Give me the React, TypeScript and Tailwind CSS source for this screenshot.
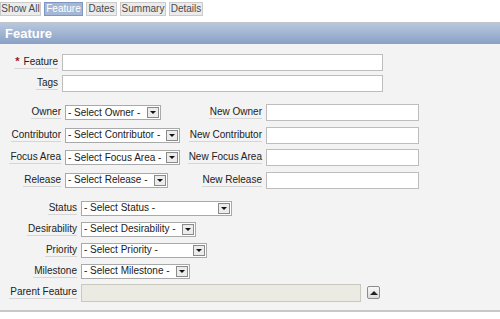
import React from 'react';

const tabs = [
  { name: 'Show All', w: 'w-[41px]', active: false },
  { name: 'Feature', w: 'w-[39px]', active: true },
  { name: 'Dates', w: 'w-[31px]', active: false },
  { name: 'Summary', w: 'w-[46px]', active: false },
  { name: 'Details', w: 'w-[34px]', active: false },
];

function Label({ text, w, required }: { text: string; w: string; required?: boolean }) {
  return (
    <div className={`${w} shrink-0 flex justify-end`}>
      <span className="border-b border-[#d6d6d6] leading-[12px] pl-[1px] text-[#222] whitespace-nowrap">
        {required && <span className="text-[#9b1515] mr-[4px] font-bold text-[11px] leading-none">*</span>}
        {text}
      </span>
    </div>
  );
}

function Select({ text, w }: { text: string; w: string }) {
  return (
    <div className={`${w} h-[15px] shrink-0 bg-white border border-[#a9a9a9] flex items-center justify-between pl-[2px] pr-[1px]`}>
      <span className="text-[#1a1a1a] whitespace-nowrap leading-none">{text}</span>
      <span className="w-[12px] h-[11px] border border-[#8a8a8a] bg-[#ececec] flex items-center justify-center">
        <span className="w-0 h-0 border-l-[3px] border-r-[3px] border-t-[3px] border-l-transparent border-r-transparent border-t-[#111]" />
      </span>
    </div>
  );
}

function TextBox({ w }: { w: string }) {
  return <div className={`${w} h-[17px] shrink-0 bg-white border border-[#bdbdbd]`} />;
}

const midRows = [
  { label: 'Owner', select: '- Select Owner -', sw: 'w-[96px]', newLabel: 'New Owner' },
  { label: 'Contributor', select: '- Select Contributor -', sw: 'w-[115px]', newLabel: 'New Contributor' },
  { label: 'Focus Area', select: '- Select Focus Area -', sw: 'w-[115px]', newLabel: 'New Focus Area' },
  { label: 'Release', select: '- Select Release -', sw: 'w-[103px]', newLabel: 'New Release' },
];

const lowRows = [
  { label: 'Status', select: '- Select Status -', sw: 'w-[151px]' },
  { label: 'Desirability', select: '- Select Desirability -', sw: 'w-[115px]' },
  { label: 'Priority', select: '- Select Priority -', sw: 'w-[126px]' },
  { label: 'Milestone', select: '- Select Milestone -', sw: 'w-[109px]' },
];

export default function App() {
  return (
    <div
      className="w-[500px] h-[319px] bg-white text-[10px] overflow-hidden"
      style={{ fontFamily: '"Liberation Sans", Arial, sans-serif' }}
    >
      {/* tab strip */}
      <div className="flex gap-[3px] pt-[2px] h-[22px]">
        {tabs.map((t) => (
          <div
            key={t.name}
            className={`${t.w} h-[14px] flex items-center justify-center border leading-none ${
              t.active
                ? 'bg-[#a4b7d7] border-[#7f97c0] text-white'
                : 'bg-[#ebebeb] border-[#cbcbcb] text-[#4a4a4a]'
            }`}
          >
            {t.name}
          </div>
        ))}
      </div>

      {/* region header */}
      <div className="border-t border-[#c4c4c4] h-[22px] bg-gradient-to-b from-[#b7c7df] to-[#8aa1c5] flex items-center pl-[5px]">
        <span className="text-white font-bold text-[13px] leading-none">Feature</span>
      </div>

      <div className="bg-[#f3f3f3] border-b-2 border-[#c8c8c8] pt-[10px] pb-[8px] flex flex-col">
        <div className="flex flex-col gap-[4px]">
          <div className="flex items-center h-[17px] gap-[4px]">
            <Label text="Feature" w="w-[58px]" required />
            <TextBox w="w-[321px]" />
          </div>
          <div className="flex items-center h-[17px] gap-[4px]">
            <Label text="Tags" w="w-[58px]" />
            <TextBox w="w-[321px]" />
          </div>
        </div>

        <div className="flex flex-col gap-[5.5px] mt-[12px]">
          {midRows.map((r) => (
            <div key={r.label} className="flex items-center h-[17px]">
              <Label text={r.label} w="w-[61px]" />
              <div className="w-[119px] ml-[4px] shrink-0 flex">
                <Select text={r.select} w={r.sw} />
              </div>
              <Label text={r.newLabel} w="w-[78px]" />
              <div className="ml-[4px]">
                <TextBox w="w-[153px]" />
              </div>
            </div>
          ))}
        </div>

        <div className="flex flex-col gap-[6px] mt-[12px]">
          {lowRows.map((r) => (
            <div key={r.label} className="flex items-center h-[15px] gap-[4px]">
              <Label text={r.label} w="w-[77px]" />
              <Select text={r.select} w={r.sw} />
            </div>
          ))}
          <div className="flex items-center h-[18px] gap-[4px] -mt-[1px]">
            <Label text="Parent Feature" w="w-[77px]" />
            <div className="w-[280px] h-[18px] bg-[#ecebe3] border border-[#c9c9c0]" />
            <div className="ml-[2px] w-[13px] h-[13px] rounded-[2px] border border-[#8c8c8c] bg-gradient-to-b from-[#f7f7f7] to-[#dcdcdc] flex items-center justify-center">
              <span className="w-0 h-0 border-l-[4px] border-r-[4px] border-b-[4px] border-l-transparent border-r-transparent border-b-[#222]" />
            </div>
          </div>
        </div>
      </div>
    </div>
  );
}
